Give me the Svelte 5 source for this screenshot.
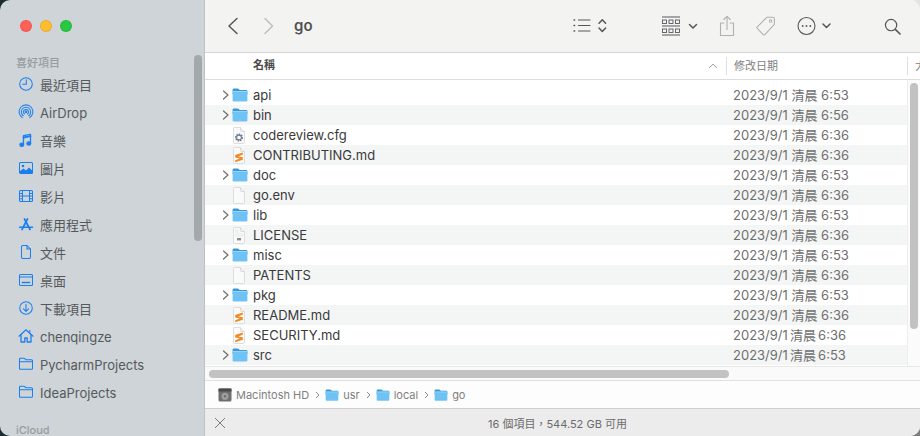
<script>
  const favs = [
    ['clock', '最近項目'], ['airdrop', 'AirDrop', true], ['music', '音樂'], ['photo', '圖片'], ['film', '影片'],
    ['apps', '應用程式'], ['doc', '文件'], ['desk', '桌面'], ['down', '下載項目'], ['home', 'chenqingze', true],
    ['folder', 'PycharmProjects', true], ['folder', 'IdeaProjects', true]
  ];
  const files = [
    ['dir', 'api', '2023/9/1 清晨 6:53'], ['dir', 'bin', '2023/9/1 清晨 6:56'],
    ['cfg', 'codereview.cfg', '2023/9/1 清晨 6:36'], ['md', 'CONTRIBUTING.md', '2023/9/1 清晨 6:36'],
    ['dir', 'doc', '2023/9/1 清晨 6:53'], ['blank', 'go.env', '2023/9/1 清晨 6:36'],
    ['dir', 'lib', '2023/9/1 清晨 6:53'], ['txt', 'LICENSE', '2023/9/1 清晨 6:36'],
    ['dir', 'misc', '2023/9/1 清晨 6:53'], ['blank', 'PATENTS', '2023/9/1 清晨 6:36'],
    ['dir', 'pkg', '2023/9/1 清晨 6:53'], ['md', 'README.md', '2023/9/1 清晨 6:36'],
    ['md', 'SECURITY.md', '2023/9/1 清晨 6:36', true], ['dir', 'src', '2023/9/1 清晨 6:53', true]
  ];
  const crumbs = ['usr', 'local', 'go'];
</script>

{#snippet folderIcon(w, h)}
  <svg class="fold" width={w} height={h} viewBox="0 0 16 14">
    <path d="M.6 5V1.800Q.6.500 1.900.500h3.600q.7 0 1.200.5l1 1h6.400q1.300 0 1.300 1.300V6H.6z" fill="#3d97d6"/>
    <rect x=".6" y="3" width="14.800" height="10.600" rx="1.100" fill="#6fc3f4"/>
    <rect x=".6" y="3" width="14.800" height="1" fill="#93d5f8"/>
  </svg>
{/snippet}

{#snippet fileIcon(kind)}
  <svg width="14" height="17" viewBox="0 0 14 17">
    <path d="M1.500 1.500q0-1 1-1h6L12.500 4.500v11q0 1-1 1h-9q-1 0-1-1z" fill="#fafafa" stroke="#d6d6d6" stroke-width=".8"/>
    <path d="M8.500.5v3q0 1 1 1h3" fill="#efefef" stroke="#d6d6d6" stroke-width=".8"/>
    {#if kind === 'cfg'}
      <circle cx="7" cy="10.500" r="3.200" fill="none" stroke="#6d7f8e" stroke-width="1.600" stroke-dasharray="1.500 .9"/>
      <circle cx="7" cy="10.500" r="2.400" fill="none" stroke="#6d7f8e" stroke-width="1.100"/>
    {:else if kind === 'md'}
      <path d="M10.800 5.500 3.200 8v2.600l4.600.9-4.600 1.800v2l7.600-2.500v-2.500L6 9.400l4.800-1.700z" fill="#f08a24"/>
    {:else if kind === 'txt'}
      <path d="M3 3h4M3 5h4M3 7h8M3 9h8" stroke="#e3e3e3" stroke-width=".8"/>
      <rect x="5" y="11" width="4" height="2.400" fill="#8a8a8a"/>
    {/if}
  </svg>
{/snippet}

{#snippet sideIcon(k)}
  <svg width="16" height="16" viewBox="0 0 16 16" fill="none" stroke="#1a7ff0" stroke-width="1.050" stroke-linecap="round" stroke-linejoin="round">
    {#if k === 'clock'}
      <circle cx="8" cy="8" r="6.300"/><path d="M8.300 3.800V8.300H4.800"/>
    {:else if k === 'airdrop'}
      <path d="M4.300 13.600a6.900 6.900 0 1 1 7.400 0"/><path d="M5.300 11.700a4.700 4.700 0 1 1 5.400 0"/><path d="M6.500 9.900a2.500 2.500 0 1 1 3 0"/><circle cx="8" cy="7.800" r=".8" fill="#1a7ff0"/>
    {:else if k === 'music'}
      <path d="M5.500 12.500V3.600l7-1.300v8.900" stroke-width="1.300"/><ellipse cx="3.800" cy="12.700" rx="2" ry="1.700" fill="#1a7ff0"/><ellipse cx="10.800" cy="11.400" rx="2" ry="1.700" fill="#1a7ff0"/><path d="M5.500 5.500l7-1.300" stroke-width="1.800"/>
    {:else if k === 'photo'}
      <rect x="1.500" y="2.500" width="13" height="11" rx="1"/><circle cx="5" cy="6" r="1.300" fill="#1a7ff0" stroke="none"/><path d="M2 13.500V11l3.500-2.500 2.500 2 3-3 3.500 3.200v2.800z" fill="#1a7ff0" stroke="none"/>
    {:else if k === 'film'}
      <rect x="1.500" y="2.500" width="13" height="11" rx="1"/><path d="M4.500 2.500v11M11.500 2.500v11M1.500 5.500h3M1.500 8h3M1.500 10.700h3M11.500 5.500h3M11.500 8h3M11.500 10.700h3M4.500 8h7"/>
    {:else if k === 'apps'}
      <path d="M4 13.500 9.500 3M12 13.500 6.500 3" stroke-width="1.700"/><path d="M1.500 11.300h13" stroke-width="1.500"/>
    {:else if k === 'doc'}
      <path d="M3.500 2.700q0-1.200 1.200-1.200H9l3.500 3.500v8.300q0 1.200-1.200 1.200H4.700q-1.200 0-1.200-1.200z"/><path d="M9 1.500V5h3.500"/>
    {:else if k === 'desk'}
      <rect x="1.500" y="2.500" width="13" height="11" rx="1"/><path d="M1.500 5h13"/><rect x="3.800" y="9.800" width="8.400" height="1.400" fill="#1a7ff0" stroke="none"/>
    {:else if k === 'down'}
      <circle cx="8" cy="8" r="6.300"/><path d="M8 4.300v7M5.400 8.800 8 11.400l2.600-2.600"/>
    {:else if k === 'home'}
      <path d="M1 8.200 8 1.800l7 6.400" stroke-width="1.200"/><path d="M3 7v7h3.800v-4h2.400v4H13V7" stroke-width="1.300"/><path d="M11.800 2.500v3"/>
    {:else}
      <path d="M1.500 4V3.200q0-1 1-1h3.300q.6 0 1 .4L8 3.800h5.500q1 0 1 1v7.500q0 1-1 1h-11q-1 0-1-1z"/><path d="M1.500 5.800h13"/>
    {/if}
  </svg>
{/snippet}

<div class="window">
  <aside class="side">
    <div class="lights"><i class="r"></i><i class="y"></i><i class="g"></i></div>
    <div class="sec">喜好項目</div>
    <ul>
      {#each favs as [k, t, latin]}
        <li>{@render sideIcon(k)}<span class:latin>{t}</span></li>
      {/each}
    </ul>
    <div class="sec cloud">iCloud</div>
    <div class="side-thumb"></div>
  </aside>

  <main class="main">
    <header class="bar">
      <svg class="tool back" width="14" height="18" viewBox="0 0 14 18" fill="none" stroke="#55585a" stroke-width="1.500" stroke-linecap="round" stroke-linejoin="round"><path d="M11 1.500 3 9l8 7.500"/></svg>
      <svg class="tool fwd" width="14" height="18" viewBox="0 0 14 18" fill="none" stroke="#bcbcbc" stroke-width="1.400" stroke-linecap="round" stroke-linejoin="round"><path d="M3 1.500 10.500 9 3 16.500"/></svg>
      <div class="title">go</div>
      <svg class="tool listv" width="35" height="18" viewBox="0 0 35 18" fill="none" stroke="#55585a" stroke-linecap="round"><path d="M5.500 3h11.500M5.500 8.500h11.500M5.500 14h11.500" stroke-width="1"/><path d="M1 3h.7M1 8.500h.7M1 14h.7" stroke-width="1.300"/><path d="M26 6.300 29.300 2.800 32.600 6.300M26 11 29.300 14.500 32.600 11" stroke-width="1.500" stroke-linejoin="round"/></svg>
      <svg class="tool group" width="36" height="20" viewBox="0 0 36 20" fill="none" stroke="#55585a"><path d="M0 1h18M0 10h18M0 19h18" stroke-width="1"/><g stroke-width=".9"><rect x=".5" y="4" width="4" height="3.500"/><rect x="7" y="4" width="4" height="3.500"/><rect x="13.500" y="4" width="4" height="3.500"/><rect x=".5" y="13" width="4" height="3.500"/><rect x="7" y="13" width="4" height="3.500"/><rect x="13.500" y="13" width="4" height="3.500"/></g><path d="M27.500 8.500 31 12l3.500-3.500" stroke-width="1.500" stroke-linecap="round" stroke-linejoin="round"/></svg>
      <svg class="tool share" width="16" height="22" viewBox="0 0 16 22" fill="none" stroke="#b1b1b1" stroke-width="1.100" stroke-linecap="round" stroke-linejoin="round"><path d="M5 8H1.500v12.500h13V8H11"/><path d="M8 14.500V1.500M4.800 4.500 8 1.300l3.200 3.200"/></svg>
      <svg class="tool tag" width="20" height="20" viewBox="0 0 20 20" fill="none" stroke="#b1b1b1" stroke-width="1.100" stroke-linejoin="round"><path d="M1.300 10.800 11 1.200h5.800q1.600 0 1.600 1.600v5.600L8.800 18.600q-.8.800-1.600 0l-5.900-6.200q-.8-.8 0-1.600z"/><circle cx="14.600" cy="5" r="1.200"/></svg>
      <svg class="tool more" width="35" height="20" viewBox="0 0 35 20" fill="none" stroke="#55585a"><circle cx="9.500" cy="10" r="8.500" stroke-width="1.100"/><circle cx="5.700" cy="10" r=".9" fill="#55585a" stroke="none"/><circle cx="9.500" cy="10" r=".9" fill="#55585a" stroke="none"/><circle cx="13.300" cy="10" r=".9" fill="#55585a" stroke="none"/><path d="M26 8 29.500 11.500 33 8" stroke-width="1.500" stroke-linecap="round" stroke-linejoin="round"/></svg>
      <svg class="tool search" width="17" height="17" viewBox="0 0 18 18" fill="none" stroke="#55585a"><circle cx="7.500" cy="7.500" r="6" stroke-width="1.300"/><path d="M12 12l5 5" stroke-width="1.700" stroke-linecap="round"/></svg>
    </header>

    <div class="heads">
      <div class="h-name">名稱</div>
      <svg class="sort" width="10" height="6" viewBox="0 0 10 6" fill="none" stroke="#9a9a9a" stroke-width="1"><path d="M1 5l4-3.800L9 5"/></svg>
      <div class="h-date">修改日期</div>
      <div class="h-size">大</div>
    </div>

    <div class="list">
      {#each files as [kind, name, date, narrow], i}
        <div class="row" class:odd={i % 2 === 1}>
          <span class="disc">
            {#if kind === 'dir'}
              <svg width="8" height="10" viewBox="0 0 8 10" fill="none" stroke="#6d6d6d" stroke-width="1.200" stroke-linecap="round" stroke-linejoin="round"><path d="M1.500 1 6 5 1.500 9"/></svg>
            {/if}
          </span>
          <span class="ico">
            {#if kind === 'dir'}{@render folderIcon(16, 14)}{:else}{@render fileIcon(kind)}{/if}
          </span>
          <span class="nm">{name}</span>
          <span class="dt" class:narrow>{date}</span>
        </div>
      {/each}
      <div class="v-thumb"></div>
    </div>

    <div class="hscroll"><div class="h-thumb"></div></div>

    <nav class="path">
      <svg class="hd" width="14" height="14" viewBox="0 0 14 14"><rect x=".5" y=".5" width="13" height="13" rx="1.500" fill="#6e6e6e"/><rect x=".5" y=".5" width="13" height="3" fill="#4a4a4a"/><circle cx="7" cy="8.300" r="3.600" fill="#9c9c9c"/><circle cx="7" cy="8.300" r="1" fill="#5e5e5e"/></svg>
      <span>Macintosh HD</span>
      {#each crumbs as c}
        <svg class="sep" width="5" height="8" viewBox="0 0 5 8" fill="none" stroke="#8d8d8d" stroke-width="1"><path d="M1 1l3 3-3 3"/></svg>
        {@render folderIcon(14, 12)}
        <span>{c}</span>
      {/each}
    </nav>

    <footer class="status">
      <svg class="close" width="12" height="12" viewBox="0 0 12 12" stroke="#7c7c7c" stroke-width="1" fill="none"><path d="M1 1l10 10M11 1 1 11"/></svg>
      <span>16 個項目，544.52 GB 可用</span>
    </footer>
  </main>
</div>

<style>
  :global(body) {
    margin: 0;
    background:
      linear-gradient(90deg, #1c2b30 50%, #e4e4e4 50%) top / 100% 50% no-repeat,
      linear-gradient(90deg, #1c2b30 50%, #7d7d7d 50%) bottom / 100% 50% no-repeat;
    min-height: 436px;
  }
  .window {
    width: 920px;
    height: 436px;
    display: flex;
    overflow: hidden;
    border-radius: 10px;
    font-family: "Inter", "Noto Sans CJK TC", sans-serif;
    -webkit-font-smoothing: antialiased;
    position: relative;
  }
  .side {
    width: 205px;
    flex: none;
    background: #ced4d7;
    border-right: 1px solid #bcc1c4;
    box-sizing: border-box;
    position: relative;
    overflow: hidden;
    padding-top: 20px;
  }
  .lights {
    display: flex;
    gap: 8px;
    padding-left: 20px;
    height: 12px;
  }
  .lights i {
    width: 12px;
    height: 12px;
    border-radius: 50%;
    box-sizing: border-box;
    border: 1px solid rgba(0, 0, 0, 0.08);
  }
  .r { background: #ff5f57; }
  .y { background: #febc2e; }
  .g { background: #28c840; }
  .sec {
    font-size: 11px;
    line-height: 14px;
    color: #979da0;
    padding-left: 16px;
    font-weight: 500;
    margin-top: 24px;
  }
  .cloud {
    position: absolute;
    left: 0;
    top: 424px;
    margin: 0;
    line-height: 12px;
  }
  ul {
    list-style: none;
    margin: 0;
    padding: 0;
  }
  li {
    height: 28px;
    display: flex;
    align-items: center;
    padding-left: 18px;
    gap: 7px;
    font-size: 13px;
    color: #55595c;
  }
  li span {
    position: relative;
    left: -1px;
  }
  li span.latin { top: 1px; }
  .side-thumb {
    position: absolute;
    left: 194px;
    top: 55px;
    width: 8px;
    height: 186px;
    border-radius: 4px;
    background: #a3a9ab;
  }
  .main {
    flex: 1;
    min-width: 0;
    display: flex;
    flex-direction: column;
    background: #fff;
  }
  .bar {
    flex: none;
    box-sizing: border-box;
    background: #f3f3f2;
    border-bottom: 1px solid #d5d5d5;
    height: 53px;
    display: flex;
    align-items: center;
  }
  .tool { flex: none; display: block; }
  .back { margin-left: 21px; }
  .fwd { margin-left: 22px; }
  .title {
    margin-left: 18px;
    width: 279px;
    flex: none;
    font-size: 15px;
    font-weight: 600;
    color: #4f5153;
    line-height: 18px;
    padding-bottom: 1px;
  }
  .group { margin-left: 54px; }
  .share { margin-left: 21px; }
  .tag { margin-left: 21px; }
  .more { margin-left: 21px; }
  .search { margin-left: 52px; }
  .heads {
    height: 27px;
    flex: none;
    box-sizing: border-box;
    border-bottom: 1px solid #dcdcdc;
    display: flex;
    align-items: center;
    font-size: 11px;
    position: relative;
    overflow: hidden;
  }
  .h-name {
    margin-left: 48px;
    width: 455px;
    flex: none;
    font-weight: 600;
    color: #4a4a4a;
    font-size: 11px;
    line-height: 14px;
    padding-bottom: 3px;
  }
  .sort { flex: none; margin-right: 8px; }
  .h-date {
    border-left: 1px solid #dedede;
    padding-left: 7px;
    width: 173px;
    flex: none;
    line-height: 18px;
    color: #80807f;
  }
  .h-size {
    border-left: 1px solid #dedede;
    padding-left: 7px;
    line-height: 18px;
    color: #80807f;
    flex: none;
  }
  .list {
    flex: none;
    height: 287px;
    padding-top: 5px;
    box-sizing: border-box;
    position: relative;
    border-bottom: 1px solid #e8e8e8;
  }
  .row {
    height: 20px;
    display: flex;
    align-items: center;
    font-size: 13px;
    color: #3a3a3a;
    width: 100%;
    padding-right: 10px;
    box-sizing: border-box;
  }
  .row.odd { background: #f4f5f5; }
  .disc {
    width: 26px;
    flex: none;
    display: flex;
    justify-content: flex-start;
    padding-left: 17px;
    box-sizing: border-box;
  }
  .ico {
    width: 22px;
    flex: none;
    display: flex;
    justify-content: flex-start;
    align-items: center;
    margin-left: 1px;
  }
  .nm { width: 480px; flex: none; margin-left: -1px; white-space: nowrap; }
  .dt {
    color: #6f6f6f;
    white-space: nowrap;
    font-size: 13px;
    position: relative;
    top: -0.5px;
  }
  .dt.narrow { word-spacing: -1.5px; }
  .v-thumb {
    position: absolute;
    right: 2px;
    top: 3px;
    width: 8px;
    height: 246px;
    border-radius: 4px;
    background: #c2c2c2;
    z-index: 1;
  }
  .list::after {
    content: "";
    position: absolute;
    right: 0;
    top: 0;
    bottom: 0;
    width: 12px;
    border-left: 1px solid #eeeeee;
    background: #fbfbfb;
    z-index: 0;
  }
  .hscroll {
    height: 14px;
    flex: none;
    box-sizing: border-box;
    padding: 3px 0 0 4px;
    border-bottom: 1px solid #e1e1e1;
    background: #fafafa;
  }
  .h-thumb {
    width: 520px;
    height: 8px;
    border-radius: 4px;
    background: #c2c2c2;
  }
  .path {
    height: 28px;
    flex: none;
    box-sizing: border-box;
    border-bottom: 1px solid #cfcfcf;
    display: flex;
    align-items: center;
    padding-left: 13px;
    font-size: 11px;
    color: #7f7f7f;
    background: #fdfdfd;
  }
  .hd { margin-right: 4px; }
  .sep { margin: 0 5px 0 6px; }
  .path :global(.fold) { margin-right: 4px; }
  .status {
    flex: 1;
    background: #ececec;
    display: flex;
    align-items: center;
    justify-content: flex-start;
    position: relative;
    font-size: 11px;
    color: #6b6b6b;
    padding-left: 283px;
  }
  .close {
    position: absolute;
    left: 9px;
    top: 8px;
  }
</style>
